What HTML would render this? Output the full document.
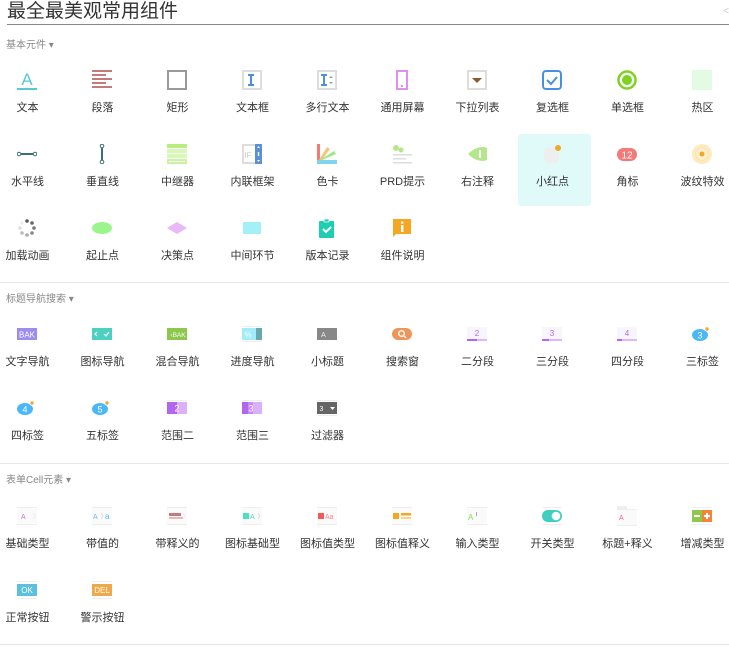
<!DOCTYPE html>
<html><head><meta charset="utf-8"><style>
*{margin:0;padding:0;box-sizing:border-box}
body{width:729px;height:648px;overflow:hidden;background:#fff;font-family:"Liberation Sans","Noto Sans CJK SC",sans-serif;color:#333;position:relative}
.title{position:absolute;left:7px;top:0;font-size:19px;line-height:24px;color:#333}
.tl{position:absolute;left:7px;right:0;top:24px;border-top:1px solid #888}
.sec{position:absolute;left:6px;font-size:10px;color:#888}
.sep{position:absolute;left:0;right:0;border-top:1px solid #e6e6e6}
.grid{position:absolute;left:-10px;width:760px;display:flex;flex-wrap:wrap}
.c{width:75px;height:74px;position:relative;text-align:center}
.c svg{position:absolute;left:27px;top:26px}
.c span{position:absolute;left:0;right:0;top:57px;font-size:11px;line-height:14px;white-space:nowrap}
.hl{position:absolute;left:518px;top:134px;width:73px;height:72px;background:#e0f9f9;border-radius:3px}
</style></head><body>
<div class="title">最全最美观常用组件</div>
<div class="tl"></div>
<div style="position:absolute;right:0;top:6px;font-size:10px;color:#ccc">&lt;</div>
<div class="sec" style="top:36px">基本元件 ▾</div>
<div class="hl"></div>
<div class="grid" style="top:44px">
<div class="c"><svg width="20" height="20"><text x="10" y="15" font-size="17" fill="#5bc8d0" text-anchor="middle" font-family="Liberation Sans">A</text><rect x="0" y="18" width="20" height="2" fill="#5bc8d0"/></svg><span>文本</span></div>
<div class="c"><svg width="20" height="20" fill="#c47a7a"><rect y="0" width="20" height="2"/><rect y="4" width="14" height="2"/><rect y="8" width="20" height="2"/><rect y="12" width="14" height="2"/><rect y="16" width="20" height="2"/></svg><span>段落</span></div>
<div class="c"><svg width="20" height="20"><rect x="1" y="1" width="18" height="18" fill="none" stroke="#999" stroke-width="2"/></svg><span>矩形</span></div>
<div class="c"><svg width="20" height="20"><rect x="1" y="1" width="18" height="18" fill="none" stroke="#ddd" stroke-width="2"/><path d="M6 5h6M6 15h6M9 5v10" stroke="#4a8fe0" stroke-width="2"/></svg><span>文本框</span></div>
<div class="c"><svg width="20" height="20"><rect x="1" y="1" width="18" height="18" fill="none" stroke="#ddd" stroke-width="2"/><path d="M4 5h6M4 15h6M7 5v10" stroke="#4a8fe0" stroke-width="2"/><path d="M12 8l2-2 2 2zM12 12l2 2 2-2z" fill="#999"/></svg><span>多行文本</span></div>
<div class="c"><svg width="20" height="20"><rect x="5" y="1" width="10" height="18" fill="none" stroke="#e08ef0" stroke-width="2"/><rect x="9" y="15" width="2" height="2" fill="#e08ef0"/></svg><span>通用屏幕</span></div>
<div class="c"><svg width="20" height="20"><rect x="1" y="1" width="18" height="18" fill="none" stroke="#ddd" stroke-width="2"/><path d="M5 8h10l-5 5z" fill="#8a5a2b"/></svg><span>下拉列表</span></div>
<div class="c"><svg width="20" height="20"><rect x="1" y="1" width="18" height="18" rx="3" fill="none" stroke="#4a90e2" stroke-width="2"/><path d="M5 10l4 4 6-7" fill="none" stroke="#4a90e2" stroke-width="2"/></svg><span>复选框</span></div>
<div class="c"><svg width="20" height="20"><circle cx="10" cy="10" r="8.5" fill="none" stroke="#7ed321" stroke-width="2.5"/><circle cx="10" cy="10" r="5" fill="#7ed321"/></svg><span>单选框</span></div>
<div class="c"><svg width="20" height="20"><rect width="20" height="20" fill="#e2fbe2"/></svg><span>热区</span></div>

<div class="c"><svg width="20" height="20"><path d="M2 10h16" stroke="#3d6e70" stroke-width="2"/><circle cx="2" cy="10" r="1.8" fill="#fff" stroke="#3d6e70"/><circle cx="18" cy="10" r="1.8" fill="#fff" stroke="#3d6e70"/></svg><span>水平线</span></div>
<div class="c"><svg width="20" height="20"><path d="M10 2v16" stroke="#3d6e70" stroke-width="2"/><circle cx="10" cy="2" r="1.8" fill="#fff" stroke="#3d6e70"/><circle cx="10" cy="18" r="1.8" fill="#fff" stroke="#3d6e70"/></svg><span>垂直线</span></div>
<div class="c"><svg width="20" height="20"><rect y="0" width="20" height="4" fill="#b8ee80"/><rect y="5" width="20" height="4" fill="#d8f8b8"/><rect y="10" width="20" height="4" fill="#d8f8b8"/><rect y="15" width="20" height="5" fill="#c8f4a0"/><rect y="17" x="2" width="16" height="1" fill="#fff"/></svg><span>中继器</span></div>
<div class="c"><svg width="20" height="20"><rect x="1" y="1" width="18" height="18" fill="none" stroke="#ddd" stroke-width="2"/><rect x="13" y="0" width="7" height="20" fill="#5b8fd6"/><text x="6" y="14" font-size="8" fill="#ccc" text-anchor="middle">IF</text><path d="M15 4l1.5-2 1.5 2zM15 16l1.5 2 1.5-2z" fill="#fff"/><rect x="15.8" y="8" width="1.4" height="4" fill="#fff"/></svg><span>内联框架</span></div>
<div class="c"><svg width="20" height="20"><rect x="0" y="0" width="3" height="16" fill="#f47a7a"/><path d="M2 16L10 3l3 2-8 11z" fill="#f0c878"/><path d="M3 16L17 7l2 3-14 6z" fill="#9ce88c"/><rect x="0" y="16" width="20" height="4" fill="#80d4f0"/></svg><span>色卡</span></div>
<div class="c"><svg width="20" height="20"><circle cx="4" cy="4" r="3" fill="#b5e68a"/><circle cx="9" cy="6" r="2.5" fill="#b5e68a"/><rect x="1" y="10" width="19" height="1.5" fill="#ddd"/><rect x="1" y="14" width="13" height="1.5" fill="#ddd"/><rect x="1" y="18" width="19" height="1.5" fill="#ddd"/></svg><span>PRD提示</span></div>
<div class="c"><svg width="20" height="20"><path d="M1 10Q8 3 16 3a7 7 0 0 1 0 14Q8 17 1 10z" fill="#b5e68a"/><rect x="12" y="6" width="2" height="8" fill="#fff"/></svg><span>右注释</span></div>
<div class="c"><svg width="20" height="20"><rect x="2" y="4" width="15" height="15" rx="4" fill="#eee"/><circle cx="16" cy="4" r="3.5" fill="#f5a623" stroke="#e0f9f9"/></svg><span>小红点</span></div>
<div class="c"><svg width="20" height="20"><rect x="0" y="4" width="20" height="13" rx="6.5" fill="#f47a7a"/><text x="10" y="14.5" font-size="10" fill="#fff" text-anchor="middle">12</text></svg><span>角标</span></div>
<div class="c"><svg width="20" height="20"><circle cx="10" cy="10" r="10" fill="#fdebc0"/><circle cx="10" cy="10" r="6.5" fill="#fbd88a"/><circle cx="10" cy="10" r="6" fill="#fdf0d0"/><circle cx="10" cy="10" r="2.5" fill="#f5a623"/></svg><span>波纹特效</span></div>

<div class="c"><svg width="20" height="20"><circle cx="10" cy="3" r="1.8" fill="#555"/><circle cx="15" cy="5" r="1.8" fill="#666"/><circle cx="17" cy="10" r="1.8" fill="#777"/><circle cx="15" cy="15" r="1.8" fill="#888"/><circle cx="10" cy="17" r="1.8" fill="#aaa"/><circle cx="5" cy="15" r="1.8" fill="#bbb"/><circle cx="3" cy="10" r="1.8" fill="#ddd"/><circle cx="5" cy="5" r="1.8" fill="#eee"/></svg><span>加载动画</span></div>
<div class="c"><svg width="20" height="20"><ellipse cx="10" cy="10" rx="10" ry="6" fill="#9cf58c"/></svg><span>起止点</span></div>
<div class="c"><svg width="20" height="20"><path d="M0 10l10-6 10 6-10 6z" fill="#e8b8f8"/></svg><span>决策点</span></div>
<div class="c"><svg width="20" height="20"><rect x="1" y="4" width="18" height="12" fill="#a3f0f8"/></svg><span>中间环节</span></div>
<div class="c"><svg width="20" height="20"><rect x="2" y="3" width="15" height="17" rx="1" fill="#1dcfb0"/><rect x="7" y="1" width="5" height="3" rx="1" fill="#1dcfb0" stroke="#fff" stroke-width=".8"/><path d="M6 11l3 3 5-5" fill="none" stroke="#fff" stroke-width="2"/></svg><span>版本记录</span></div>
<div class="c"><svg width="20" height="20"><path d="M1 1h18v15H4l-3 3z" fill="#f5a623"/><rect x="9" y="7" width="2.4" height="7" fill="#fff"/><rect x="9" y="3.5" width="2.4" height="2.2" fill="#fff"/></svg><span>组件说明</span></div>
</div>

<div class="sep" style="top:282px"></div>
<div class="sec" style="top:290px">标题导航搜索 ▾</div>
<div class="grid" style="top:298px">
<div class="c"><svg width="20" height="20"><rect y="4" width="20" height="12" fill="#9c8cf0"/><text x="10" y="13.5" font-size="8" fill="#fff" text-anchor="middle">BAK</text></svg><span>文字导航</span></div>
<div class="c"><svg width="20" height="20"><rect y="4" width="20" height="12" fill="#4dd0c0"/><path d="M5 8l-2 2 2 2M12 10l2 2 3-4" fill="none" stroke="#fff" stroke-width="1.2"/></svg><span>图标导航</span></div>
<div class="c"><svg width="20" height="20"><rect y="4" width="20" height="12" fill="#8cc84b"/><text x="11" y="13" font-size="6.5" fill="#fff" text-anchor="middle">‹BAK</text></svg><span>混合导航</span></div>
<div class="c"><svg width="20" height="20"><rect y="2" width="20" height="1" fill="#eee"/><rect y="4" width="14" height="12" fill="#a0ecf8"/><rect x="14" y="4" width="6" height="12" fill="#6aa8b0"/><rect y="17" width="20" height="1" fill="#eee"/><text x="6" y="13.5" font-size="8" fill="#fff" text-anchor="middle">%</text></svg><span>进度导航</span></div>
<div class="c"><svg width="20" height="20"><rect y="4" width="20" height="12" fill="#888"/><text x="6.5" y="13" font-size="7" fill="#eee" text-anchor="middle">A</text></svg><span>小标题</span></div>
<div class="c"><svg width="20" height="20"><rect y="4" width="20" height="12" rx="6" fill="#f0955a"/><circle cx="9.5" cy="9.5" r="2.8" fill="none" stroke="#fff" stroke-width="1.3"/><path d="M11.5 11.5l2.5 2.5" stroke="#fff" stroke-width="1.3"/></svg><span>搜索窗</span></div>
<div class="c"><svg width="20" height="20"><rect y="3" width="20" height="12" fill="#f8f6fc"/><text x="10" y="12" font-size="8" fill="#b266f0" text-anchor="middle">2</text><rect y="15" width="10" height="2" fill="#b266f0"/><rect x="10" y="15" width="10" height="2" fill="#dcb8f8"/></svg><span>二分段</span></div>
<div class="c"><svg width="20" height="20"><rect y="3" width="20" height="12" fill="#f8f6fc"/><text x="10" y="12" font-size="8" fill="#b266f0" text-anchor="middle">3</text><rect y="15" width="7" height="2" fill="#b266f0"/><rect x="7" y="15" width="13" height="2" fill="#dcb8f8"/></svg><span>三分段</span></div>
<div class="c"><svg width="20" height="20"><rect y="3" width="20" height="12" fill="#f8f6fc"/><text x="10" y="12" font-size="8" fill="#b266f0" text-anchor="middle">4</text><rect y="15" width="5" height="2" fill="#b266f0"/><rect x="5" y="15" width="15" height="2" fill="#dcb8f8"/></svg><span>四分段</span></div>
<div class="c"><svg width="20" height="20"><ellipse cx="8" cy="11" rx="8" ry="6" fill="#4ab8f8"/><text x="8" y="14.5" font-size="9" fill="#fff" text-anchor="middle">3</text><circle cx="15" cy="5" r="2.2" fill="#f5a623" stroke="#fff"/></svg><span>三标签</span></div>
<div class="c"><svg width="20" height="20"><ellipse cx="8" cy="11" rx="8" ry="6" fill="#4ab8f8"/><text x="8" y="14.5" font-size="9" fill="#fff" text-anchor="middle">4</text><circle cx="15" cy="5" r="2.2" fill="#f5a623" stroke="#fff"/></svg><span>四标签</span></div>
<div class="c"><svg width="20" height="20"><ellipse cx="8" cy="11" rx="8" ry="6" fill="#4ab8f8"/><text x="8" y="14.5" font-size="9" fill="#fff" text-anchor="middle">5</text><circle cx="15" cy="5" r="2.2" fill="#f5a623" stroke="#fff"/></svg><span>五标签</span></div>
<div class="c"><svg width="20" height="20"><rect y="2" width="20" height="1" fill="#eee"/><rect y="4" width="10" height="12" fill="#b266f0"/><rect x="10" y="4" width="10" height="12" fill="#dcb0f8"/><text x="10" y="13.5" font-size="9" fill="#fff" text-anchor="middle">2</text></svg><span>范围二</span></div>
<div class="c"><svg width="20" height="20"><rect y="2" width="20" height="1" fill="#eee"/><rect y="4" width="6" height="12" fill="#b266f0"/><rect x="6" y="4" width="14" height="12" fill="#dcb0f8"/><rect x="6" y="4" width="5" height="12" fill="#c88af4"/><text x="9" y="13.5" font-size="9" fill="#fff" text-anchor="middle">3</text></svg><span>范围三</span></div>
<div class="c"><svg width="20" height="20"><rect y="2" width="20" height="1" fill="#eee"/><rect y="4" width="20" height="12" fill="#666"/><text x="4.5" y="13" font-size="7" fill="#fff" text-anchor="middle">3</text><path d="M13 9h5l-2.5 3z" fill="#fff"/><rect y="17" width="20" height="1" fill="#eee"/></svg><span>过滤器</span></div>
</div>

<div class="sep" style="top:463px"></div>
<div class="sec" style="top:471px">表单Cell元素 ▾</div>
<div class="grid" style="top:480px">
<div class="c"><svg width="20" height="20"><rect y="2" width="20" height="16" fill="#fafafa"/><rect y="1" width="20" height="1" fill="#eee"/><rect y="18" width="20" height="1" fill="#eee"/><text x="4" y="13" font-size="7" fill="#d070e0">A</text><path d="M16 7l2 3-2 3" fill="none" stroke="#eee"/></svg><span>基础类型</span></div>
<div class="c"><svg width="20" height="20"><rect y="2" width="20" height="16" fill="#fafafa"/><rect y="1" width="20" height="1" fill="#eee"/><rect y="18" width="20" height="1" fill="#eee"/><text x="1" y="13" font-size="7" fill="#5bc0e0">A</text><text x="13" y="13" font-size="8" fill="#5bc0e0">a</text><path d="M9 7l2 3-2 3" fill="none" stroke="#ddd"/></svg><span>带值的</span></div>
<div class="c"><svg width="20" height="20"><rect y="2" width="20" height="16" fill="#fafafa"/><rect y="1" width="20" height="1" fill="#eee"/><rect y="18" width="20" height="1" fill="#eee"/><rect x="2" y="7" width="12" height="3" fill="#c47a7a"/><rect x="2" y="11" width="14" height="2" fill="#eab8b8"/><path d="M16 7l2 3-2 3" fill="none" stroke="#eee"/></svg><span>带释义的</span></div>
<div class="c"><svg width="20" height="20"><rect y="2" width="20" height="16" fill="#fafafa"/><rect y="1" width="20" height="1" fill="#eee"/><rect y="18" width="20" height="1" fill="#eee"/><rect x="1" y="7" width="6" height="6" fill="#4de0c0"/><text x="8" y="13" font-size="7" fill="#4de0c0">A</text><path d="M16 7l2 3-2 3" fill="none" stroke="#ddd"/></svg><span>图标基础型</span></div>
<div class="c"><svg width="20" height="20"><rect y="2" width="20" height="16" fill="#fafafa"/><rect y="1" width="20" height="1" fill="#eee"/><rect y="18" width="20" height="1" fill="#eee"/><rect x="1" y="7" width="6" height="6" fill="#f05a5a"/><text x="8" y="13" font-size="7" fill="#f08a8a">Aa</text></svg><span>图标值类型</span></div>
<div class="c"><svg width="20" height="20"><rect y="2" width="20" height="16" fill="#fafafa"/><rect y="1" width="20" height="1" fill="#eee"/><rect y="18" width="20" height="1" fill="#eee"/><rect x="1" y="7" width="6" height="6" fill="#f5a623"/><rect x="9" y="7" width="10" height="2.5" fill="#f5a623"/><rect x="9" y="11" width="10" height="2" fill="#fbd38a"/></svg><span>图标值释义</span></div>
<div class="c"><svg width="20" height="20"><rect y="2" width="20" height="16" fill="#fafafa"/><rect y="1" width="20" height="1" fill="#eee"/><rect y="18" width="20" height="1" fill="#eee"/><text x="1" y="14" font-size="8" fill="#8cd84b">A</text><text x="9" y="10" font-size="5" fill="#555">I</text></svg><span>输入类型</span></div>
<div class="c"><svg width="20" height="20"><rect y="1" width="20" height="1" fill="#eee"/><rect y="18" width="20" height="1" fill="#eee"/><rect x="0" y="4" width="20" height="12" rx="6" fill="#3ecfc0"/><circle cx="14" cy="10" r="4.3" fill="#fff"/></svg><span>开关类型</span></div>
<div class="c"><svg width="20" height="20"><rect y="0" width="10" height="3" fill="#eee"/><rect y="3" width="20" height="16" fill="#fafafa"/><rect y="3" width="20" height="1" fill="#eee"/><rect y="19" width="20" height="1" fill="#eee"/><text x="2" y="14" font-size="7" fill="#f06090">A</text></svg><span>标题+释义</span></div>
<div class="c"><svg width="20" height="20"><rect y="1" width="20" height="1" fill="#eee"/><rect y="18" width="20" height="1" fill="#eee"/><rect x="0" y="4" width="10" height="12" fill="#8cc84b"/><rect x="10" y="4" width="10" height="12" fill="#f5843a"/><rect x="2" y="9" width="6" height="2" fill="#fff"/><rect x="12" y="9" width="6" height="2" fill="#fff"/><rect x="14" y="7" width="2" height="6" fill="#fff"/></svg><span>增减类型</span></div>
<div class="c"><svg width="20" height="20"><rect y="1" width="20" height="1" fill="#eee"/><rect y="18" width="20" height="1" fill="#eee"/><rect x="0" y="4" width="20" height="12" fill="#5bc0de"/><text x="10" y="13" font-size="8" fill="#fff" text-anchor="middle">OK</text></svg><span>正常按钮</span></div>
<div class="c"><svg width="20" height="20"><rect y="1" width="20" height="1" fill="#eee"/><rect y="18" width="20" height="1" fill="#eee"/><rect x="0" y="4" width="20" height="12" fill="#f0a848"/><text x="10" y="13" font-size="8" fill="#fff" text-anchor="middle">DEL</text></svg><span>警示按钮</span></div>
</div>
<div class="sep" style="top:644px"></div>
</body></html>
